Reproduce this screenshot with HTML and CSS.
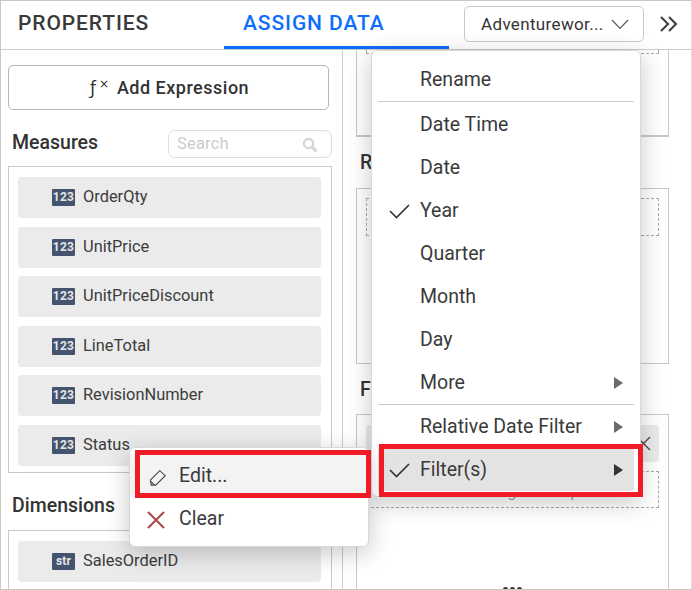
FILE: index.html
```html
<!DOCTYPE html>
<html lang="en">
<head>
<meta charset="utf-8">
<title>Assign Data</title>
<link rel="stylesheet" href="styles.css">
</head>
<body>
<div class="app">
  <header class="header">
    <div class="tab tab-props">PROPERTIES</div>
    <div class="tab tab-assign">ASSIGN DATA</div>
    <div class="ds-select">
      <span class="ds-name">Adventurewor...</span>
      <svg class="ds-chev" width="18" height="11" viewBox="0 0 18 11"><path d="M1 1 L9 9.5 L17 1" fill="none" stroke="#555" stroke-width="1.1"/></svg>
    </div>
    <svg class="collapse" width="20" height="18" viewBox="0 0 20 18"><path d="M2 2 L9 9 L2 16 M10 2 L17 9 L10 16" fill="none" stroke="#444" stroke-width="2.2"/></svg>
  </header>
  <main class="body">
    <section class="left">
      <button class="add-expr"><span class="fx">&#402;<span class="fx-x">&#215;</span></span>Add Expression</button>
      <div class="head-row measures-head">
        <h2 class="heading">Measures</h2>
        <div class="search"><span class="search-ph">Search</span>
          <svg class="search-icon" width="16" height="16" viewBox="0 0 16 16"><circle cx="6.5" cy="6.5" r="4.6" fill="none" stroke="#d4d4d4" stroke-width="2.2"/><path d="M10 10 L14.5 14.5" stroke="#d4d4d4" stroke-width="3"/></svg>
        </div>
      </div>
      <div class="list measures">
        <div class="item"><span class="badge">123</span><span class="item-text">OrderQty</span></div>
        <div class="item"><span class="badge">123</span><span class="item-text">UnitPrice</span></div>
        <div class="item"><span class="badge">123</span><span class="item-text">UnitPriceDiscount</span></div>
        <div class="item"><span class="badge">123</span><span class="item-text">LineTotal</span></div>
        <div class="item"><span class="badge">123</span><span class="item-text">RevisionNumber</span></div>
        <div class="item"><span class="badge">123</span><span class="item-text">Status</span></div>
      </div>
      <h2 class="heading dim-head">Dimensions</h2>
      <div class="list dims">
        <div class="item"><span class="badge">str</span><span class="item-text">SalesOrderID</span></div>
      </div>
    </section>
    <section class="right">
      <div class="well well-a"><div class="drop drop-a"></div></div>
      <h2 class="heading rhead">Rows</h2>
      <div class="well well-b"><div class="drop drop-b"></div></div>
      <h2 class="heading rhead fhead">Filters</h2>
      <div class="well well-c">
        <div class="chip"><svg class="chip-x" width="15" height="15" viewBox="0 0 15 15"><path d="M1 1 L14 14 M14 1 L1 14" fill="none" stroke="#444" stroke-width="1.3"/></svg></div>
        <div class="drop drop-c">Drag and drop</div>
        <div class="dots"><i></i><i></i><i></i></div>
      </div>
    </section>
  </main>

  <div class="menu main-menu">
    <div class="mi">Rename</div>
    <div class="sep"></div>
    <div class="mi">Date Time</div>
    <div class="mi">Date</div>
    <div class="mi"><svg class="check" width="22" height="16" viewBox="0 0 22 16"><path d="M1 8 L7.5 14.5 L20 2" fill="none" stroke="#333" stroke-width="1.6"/></svg>Year</div>
    <div class="mi">Quarter</div>
    <div class="mi">Month</div>
    <div class="mi">Day</div>
    <div class="mi">More<span class="arrow"></span></div>
    <div class="sep"></div>
    <div class="mi">Relative Date Filter<span class="arrow"></span></div>
    <div class="mi mi-on"><svg class="check" width="22" height="16" viewBox="0 0 22 16"><path d="M1 8 L7.5 14.5 L20 2" fill="none" stroke="#333" stroke-width="1.6"/></svg>Filter(s)<span class="arrow arrow-dark"></span></div>
  </div>

  <div class="menu sub-menu">
    <div class="si si-on"><svg class="si-icon si-edit" width="18" height="18" viewBox="0 0 20 20"><path d="M1.5 13.5 L12 3 L18 8.5 L7.5 19 L2.5 19 Z M1.5 14.5 L6.5 19" fill="none" stroke="#444" stroke-width="1.2"/></svg>Edit...</div>
    <div class="si"><svg class="si-icon" width="18" height="18" viewBox="0 0 18 18"><path d="M1 1 L17 17 M17 1 L1 17" fill="none" stroke="#a9484a" stroke-width="2"/></svg>Clear</div>
  </div>

  <div class="hl hl-filter"></div>
  <div class="hl hl-edit"></div>
</div>
</body>
</html>
```

FILE: styles.css
```css
* { box-sizing: border-box; }
html, body { margin: 0; padding: 0; }
body { width: 692px; height: 590px; overflow: hidden; background: #fff; font-family: Roboto, "Liberation Sans", sans-serif; color: #333; }
.app { position: relative; width: 692px; height: 590px; border: 1px solid #c8c8c8; border-right-color: #ddd; overflow: hidden; }

.header { display: flex; align-items: center; height: 49px; border-bottom: 1px solid #ccc; position: relative; }
.tab { height: 48px; line-height: 44px; font-weight: 500; font-size: 21px; letter-spacing: 0.9px; }
.tab-props { width: 223px; padding-left: 17px; color: #3a3a3a; }
.tab-assign { width: 225px; padding-left: 19px; color: #0d6efd; border-bottom: 3px solid #0d6efd; }
.ds-select { display: flex; align-items: center; justify-content: space-between; width: 180px; height: 36px; margin-left: 15px; margin-top: -3px; padding: 0 14px 0 16px; border: 1px solid #c8c8c8; border-radius: 5px; font-size: 17px; letter-spacing: 0.35px; }
.ds-chev { flex: none; margin-top: 1px; }
.collapse { margin-left: 15px; margin-top: -2px; }

.body { display: flex; height: 539px; }
.left { width: 342px; flex: none; border-right: 1px solid #ccc; padding: 15px 10px 0 7px; }
.add-expr { display: flex; align-items: center; justify-content: center; width: 321px; height: 45px; background: #fff; border: 1px solid #b5b5b5; border-radius: 5px; font: 500 18px Roboto, sans-serif; letter-spacing: 0.5px; color: #333; }
.fx { position: relative; font-size: 17px; width: 17px; margin-right: 10px; margin-left: 2px; font-family: "DejaVu Sans", sans-serif; font-weight: 400; text-align: left; }
.fx-x { position: absolute; left: 9px; top: -1px; font-size: 12px; }
.head-row { display: flex; align-items: center; justify-content: space-between; height: 28px; margin-top: 20px; }
.heading { margin: 0; font-size: 19.5px; font-weight: 500; color: #333; }
.measures-head .heading { padding: 0 0 3px 4px; }
.search { display: flex; align-items: center; justify-content: space-between; width: 164px; height: 28px; border: 1px solid #ddd; border-radius: 7px; padding: 0 13px 0 8px; }
.search-ph { font-size: 16.5px; color: #ccc; letter-spacing: 0.2px; padding-bottom: 2px; }
.search-icon { margin-top: 2px; }
.list { border: 1px solid #c8c8c8; width: 324px; padding: 10px 10px 10px 9px; display: flex; flex-direction: column; gap: 8.5px; }
.measures { margin-top: 8px; height: 307px; }
.dim-head { margin-top: 21px; padding-left: 4px; height: 24px; line-height: 24px; }
.dims { margin-top: 12px; height: 80px; }
.item { display: flex; align-items: center; height: 41px; flex: none; background: #ebebeb; border-radius: 4px; padding-left: 34px; font-size: 16.4px; color: #3c3c3c; }
.item-text { padding-bottom: 2px; }
.badge { display: inline-block; width: 23px; height: 17px; line-height: 17px; margin-right: 8px; background: #44546f; color: #e6e6e6; font-size: 12px; font-weight: 700; letter-spacing: 0.2px; text-align: center; border-radius: 1px; }

.right { flex: 1; padding: 0 0 0 13px; }
.well { border: 1px solid #c8c8c8; width: 313px; padding: 0 9px; position: relative; }
.well-a { height: 88px; margin-top: -1px; border-top: 0; border-bottom-width: 2px; }
.drop { border: 1px dashed #aaa; height: 38px; }
.drop-a { margin-top: 0; height: 5px; border-top: 0; }
.rhead { margin-top: 15px; height: 22px; line-height: 22px; padding-left: 4px; }
.well-b { height: 176px; margin-top: 14px; padding-top: 9px; }
.drop-b { height: 38px; }
.fhead { margin-top: 15px; }
.well-c { height: 176px; margin-top: 13px; padding-top: 10px; }
.chip { position: relative; height: 37px; background: #ebebeb; border-radius: 4px; }
.chip-x { position: absolute; right: 8px; top: 11px; }
.drop-c { margin-top: 9px; height: 37px; padding-left: 118px; font-size: 15px; color: #999; line-height: 40px; }
.dots { position: absolute; left: 146px; top: 172px; display: flex; gap: 2px; }
.dots i { display: block; width: 5px; height: 5px; border-radius: 50%; background: #333; }

.menu { position: absolute; background: #fff; border: 1px solid #d8d8d8; border-radius: 6px; box-shadow: 0 6px 24px rgba(0,0,0,.22); }
.main-menu { left: 370px; top: 49px; width: 270px; height: 447px; padding: 7px 6px 0 6px; }
.mi { position: relative; height: 43px; line-height: 43px; padding-left: 42px; font-size: 19.5px; color: #3a3a3a; }
.sep { height: 1px; background: #ccc; margin: 0; }
.mi:first-child + .sep { margin-bottom: 1px; }
.mi-on { background: #e3e3e3; }
.check { position: absolute; left: 11px; top: 14px; }
.arrow { position: absolute; right: 11px; top: 16px; width: 0; height: 0; border-left: 9px solid #6b6b6b; border-top: 6px solid transparent; border-bottom: 6px solid transparent; }
.arrow-dark { border-left-color: #333; }

.sub-menu { left: 128px; top: 446px; width: 240px; height: 100px; padding: 6px 0; }
.si { position: relative; height: 43px; line-height: 43px; padding-left: 49px; font-size: 19.5px; color: #3a3a3a; }
.si-on { background: #f3f3f3; }
.si-icon { position: absolute; left: 17px; top: 14px; }
.si-edit { left: 19px; }

.hl { position: absolute; border: 5px solid #ef1c25; pointer-events: none; }
.hl-filter { left: 378px; top: 443px; width: 264px; height: 53px; }
.hl-edit { left: 134px; top: 449px; width: 236px; height: 48px; }
```
